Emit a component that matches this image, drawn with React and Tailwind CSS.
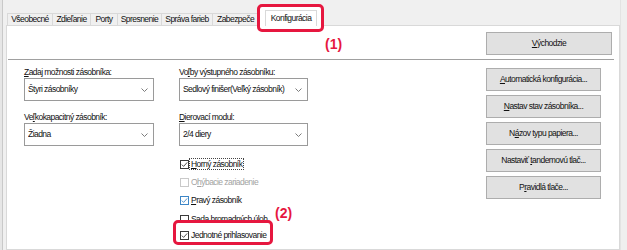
import React from "react";

const tabs = [
  { label: "Všeobecné", w: "w-[45px]" },
  { label: "Zdieľanie", w: "w-[38px]" },
  { label: "Porty", w: "w-[27px]" },
  { label: "Spresnenie", w: "w-[44px]" },
  { label: "Správa farieb", w: "w-[51px]" },
];

function Chevron() {
  return (
    <svg width="7" height="4" viewBox="0 0 7 4" className="shrink-0">
      <polyline points="0.5,0.5 3.5,3.5 6.5,0.5" fill="none" stroke="#6d6d6d" strokeWidth="0.9" />
    </svg>
  );
}

function Combo({ children }) {
  return (
    <div className="h-[23px] border border-[#9a9a9a] bg-white flex items-center pl-[3px] pr-[5px]">
      <span className="flex-1 truncate">{children}</span>
      <Chevron />
    </div>
  );
}

function Check({ checked, tone = "dark" }) {
  const box =
    tone === "blue"
      ? "border-[#3d86c6]"
      : tone === "off"
      ? "border-[#c9c9c9]"
      : "border-[#3a3a3a]";
  const stroke = tone === "blue" ? "#3d86c6" : "#3a3a3a";
  return (
    <div className={`w-[9px] h-[9px] border bg-white shrink-0 flex items-center justify-center ${box}`}>
      {checked && (
        <svg width="7" height="7" viewBox="0 0 7 7">
          <polyline points="0.8,3.6 2.6,5.4 6.2,1.4" fill="none" stroke={stroke} strokeWidth="0.9" />
        </svg>
      )}
    </div>
  );
}

function Button({ children, className = "" }) {
  return (
    <div
      className={`h-[23px] bg-[#e1e1e1] border border-[#adadad] flex items-center justify-center ${className}`}
    >
      {children}
    </div>
  );
}

export default function App() {
  return (
    <div className="w-[627px] h-[250px] bg-[#f0f0f0] flex overflow-hidden font-['Liberation_Sans',Arial,sans-serif] text-[8.5px] tracking-[-0.55px] leading-[11px] text-[#111]">
      {/* window edge on the left */}
      <div className="w-[6px] shrink-0 flex">
        <div className="w-[2px] bg-[#e6e6e6]" />
        <div className="w-[1px] bg-[#c9c9c9]" />
        <div className="flex-1 bg-[#f0f0f0]" />
      </div>

      <div className="w-[614px] shrink-0 flex flex-col">
        {/* tab strip */}
        <div className="h-[25px] flex items-end pl-[1px]">
          {tabs.map((t) => (
            <div
              key={t.label}
              className={`${t.w} h-[12px] border-l border-t border-[#d9d9d9] bg-[#f0f0f0] flex items-center justify-center whitespace-nowrap`}
            >
              {t.label}
            </div>
          ))}
          <div className="w-[53px] h-[12px] border-l border-t border-[#d9d9d9] bg-[#f0f0f0] flex items-center pl-[4px] whitespace-nowrap overflow-hidden">
            Zabezpeče
          </div>
          <div className="relative">
            <div className="absolute left-[-8px] top-[-6px] w-[67px] h-[28px] bg-white border-[3px] border-[#e6173f] rounded-[5px]" />
            <div className="relative z-10 w-[52px] h-[16px] -mb-[1px] bg-white border border-b-0 border-[#d9d9d9] flex items-center justify-center whitespace-nowrap">
              Konfigurácia
            </div>
            <div className="absolute left-[60px] top-[27px] text-[14px] leading-[14px] tracking-normal font-bold text-[#e6173f] whitespace-nowrap">
              (1)
            </div>
          </div>
        </div>

        {/* panel */}
        <div className="flex-1 bg-white border border-[#d9d9d9] flex flex-col">
          <div className="flex justify-end pr-[7px] pt-[6px]">
            <Button className="w-[126px]">
              <span>
                <u>V</u>ýchodzie
              </span>
            </Button>
          </div>
          <div className="h-[1px] bg-[#a0a0a0] mt-[4px] ml-[1px] mr-[5px]" />

          <div className="flex flex-1">
            {/* left settings */}
            <div className="flex pl-[17px] pt-[7px]">
              <div className="w-[130px] flex flex-col">
                <div className="h-[11px] whitespace-nowrap">
                  <u>Z</u>adaj možnosti zásobníka:
                </div>
                <Combo>Štyri zásobníky</Combo>
                <div className="h-[11px] mt-[11px] whitespace-nowrap">
                  Ve<u>ľ</u>kokapacitný zásobník:
                </div>
                <Combo>Žiadna</Combo>
              </div>

              <div className="w-[129px] ml-[25px] flex flex-col">
                <div className="h-[11px] whitespace-nowrap">
                  Vo<u>ľ</u>by výstupného zásobníku:
                </div>
                <Combo>Sedlový finišer(Veľký zásobník)</Combo>
                <div className="h-[11px] mt-[11px] whitespace-nowrap">
                  <u>D</u>ierovací modul:
                </div>
                <Combo>2/4 diery</Combo>

                <div className="mt-[9px] flex flex-col">
                  <div className="h-[18px] flex items-center pl-[1px]">
                    <Check checked />
                    <span className="ml-[1px] px-[1px] outline outline-1 outline-dotted outline-[#444] leading-[10px] whitespace-nowrap">
                      <u>H</u>orný zásobník
                    </span>
                  </div>
                  <div className="h-[18px] flex items-center pl-[1px] text-[#a3a3a3]">
                    <Check tone="off" />
                    <span className="ml-[2px] whitespace-nowrap">
                      O<u>h</u>ýbacie zariadenie
                    </span>
                  </div>
                  <div className="h-[19px] flex items-center pl-[1px]">
                    <Check checked tone="blue" />
                    <span className="ml-[2px] whitespace-nowrap">
                      <u>P</u>ravý zásobník
                    </span>
                  </div>
                  <div className="h-[18px] flex items-center pl-[1px]">
                    <Check />
                    <span className="ml-[2px] whitespace-nowrap">Sada hromadných úloh</span>
                  </div>
                  <div className="relative h-[18px] -mt-[2px] flex items-center pl-[1px]">
                    <div className="absolute left-[-6px] top-[-6px] w-[100px] h-[25px] bg-white border-[3px] border-[#e6173f] rounded-[5px]" />
                    <div className="relative z-10 flex items-center">
                      <Check checked />
                      <span className="ml-[2px] whitespace-nowrap">Jednotné prihlasovanie</span>
                    </div>
                    <div className="absolute left-[96px] top-[-20px] text-[14px] leading-[14px] tracking-normal font-bold text-[#e6173f] whitespace-nowrap">
                      (2)
                    </div>
                  </div>
                </div>
              </div>
            </div>

            {/* right buttons */}
            <div className="ml-auto mr-[18px] mt-[8px] w-[115px] flex flex-col gap-[4px]">
              <Button>
                <span>
                  <u>A</u>utomatická konfigurácia...
                </span>
              </Button>
              <Button>
                <span>
                  <u>N</u>astav stav zásobníka...
                </span>
              </Button>
              <Button>
                <span>
                  N<u>á</u>zov typu papiera...
                </span>
              </Button>
              <Button>
                <span>
                  Nastaviť <u>t</u>andemovú tlač...
                </span>
              </Button>
              <Button>
                <span>
                  P<u>r</u>avidlá tlače...
                </span>
              </Button>
            </div>
          </div>
        </div>
      </div>

      {/* window edge on the right */}
      <div className="flex-1 border-l border-[#e3e3e3] bg-[#efefef]" />
    </div>
  );
}
